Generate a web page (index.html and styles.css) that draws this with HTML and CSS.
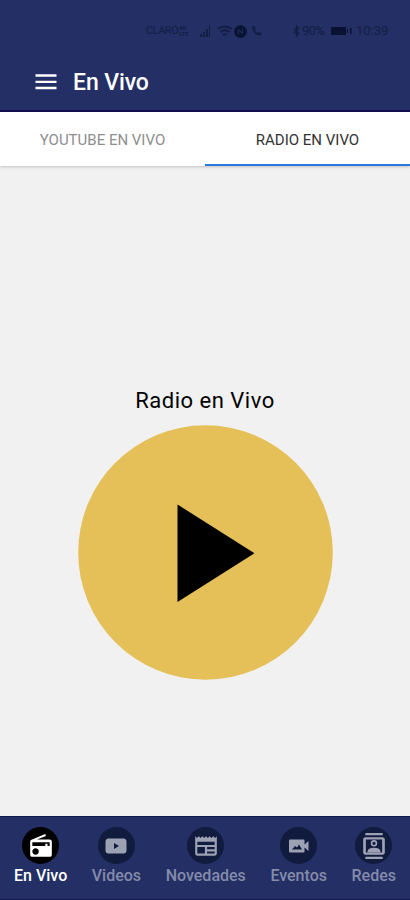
FILE: index.html
```
<!DOCTYPE html>
<html lang="es">
  <head>
    <meta charset="utf-8">
    <title>En Vivo</title>
    <link rel="stylesheet" href="styles.css">
  </head>
  <body>

    <header class="app-header">
      <div class="status-bar">
        <span class="carrier">CLARO</span>
        <span class="network"><span>4G</span><span>LTE</span></span>
        <svg class="signal" width="11" height="12" viewBox="0 0 11 12"><path d="M0 9h2v3H0zM3 7h2v5H3zM6 4h2v8H6zM9 0h1v12H9z"/></svg>
        <svg class="wifi" width="16" height="13" viewBox="0 0 16 13"><path d="M1 4q7-5 14 0M3.500 7q4.500-3.500 9 0M6 10q2-1.500 4 0"/></svg>
        <svg class="nfc" width="13" height="13" viewBox="0 0 13 13"><circle cx="6.500" cy="6.500" r="6.300"/><path d="M4.300 9.500v-5l4.400 4v-5"/></svg>
        <svg class="phone" width="12" height="12" viewBox="0 0 12 12"><path d="M1 1l2.500 0 1 3-1 1q1 2 3.500 3l1-1 2.500 1v2.500Q2 11 1 1z"/></svg>
        <svg class="bluetooth" width="7" height="12" viewBox="0 0 7 12"><path d="M1 3.500l4.500 4.500L3.500 11V1l2 2.500L1 8"/></svg>
        <span class="percent">90%</span>
        <svg class="battery" width="21" height="10" viewBox="0 0 21 10"><path d="M0 1h15v8H0zM16 3h1v4h-1zM19 2h1.500v6H19z"/></svg>
        <span class="clock">10:39</span>
      </div>

      <div class="title-bar">
        <svg class="menu-icon" width="22" height="18" viewBox="0 0 22 18"><path d="M0.500 2.500h21M0.500 8.800h21M0.500 15h21"/></svg>
        <h1>En Vivo</h1>
      </div>
    </header>

    <nav class="tabs">
      <a class="tab">YOUTUBE EN VIVO</a>
      <a class="tab tab-active">RADIO EN VIVO</a>
    </nav>

    <main class="player">
      <h2>Radio en Vivo</h2>
      <svg class="play-button" width="256" height="256" viewBox="0 0 256 256">
        <circle cx="128.500" cy="127.500" r="127.300"/>
        <path d="M100.500 79.500v97.500l77-48.700z"/>
      </svg>
    </main>

    <nav class="bottom-nav">
      <a class="nav-item nav-active">
        <span class="nav-icon">
          <svg width="26" height="26" viewBox="0 0 24 24"><path fill-rule="evenodd" d="M3.240 6.150C2.510 6.430 2 7.170 2 8v12c0 1.100.890 2 2 2h16c1.110 0 2-.900 2-2V8c0-1.110-.890-2-2-2H8.300l8.260-3.340L15.880 1 3.240 6.150zM7 20c-1.660 0-3-1.340-3-3s1.340-3 3-3 3 1.340 3 3-1.340 3-3 3zm13-8h-2v-2h-2v2H4V8.500h16z"/></svg>
        </span>
        <span>En Vivo</span>
      </a>
      <a class="nav-item">
        <span class="nav-icon">
          <svg width="24" height="24" viewBox="0 0 24 24"><path fill-rule="evenodd" d="M4.500 4.500h15Q22.500 4.500 22.500 8v8q0 3.500-3 3.500h-15q-3 0-3-3.500V8q0-3.500 3-3.500zM10 9v6l5-3z"/></svg>
        </span>
        <span>Videos</span>
      </a>
      <a class="nav-item">
        <span class="nav-icon">
          <svg width="26" height="26" viewBox="0 0 24 24"><path fill-rule="evenodd" d="M22 3l-1.670 1.670L18.670 3 17 4.670 15.330 3l-1.660 1.670L12 3l-1.670 1.670L8.670 3 7 4.670 5.330 3 3.670 4.670 2 3v16c0 1.100.900 2 2 2h16c1.100 0 2-.900 2-2V3zM11 19H4v-6h7v6zm9 0h-7v-2h7v2zm0-4h-7v-2h7v2zm0-4H4V8h16v3z"/></svg>
        </span>
        <span>Novedades</span>
      </a>
      <a class="nav-item">
        <span class="nav-icon">
          <svg width="20" height="14" viewBox="0 0 20 14"><path fill-rule="evenodd" d="M1 0.500h13.500q1 0 1 1v4L19.500 2v10l-4-3.500v4q0 1-1 1H1q-1 0-1-1v-11q0-1 1-1zM3 10.500h10L10 5.500 8 8.500 6 7z"/></svg>
        </span>
        <span>Eventos</span>
      </a>
      <a class="nav-item">
        <span class="nav-icon">
          <svg width="26" height="26" viewBox="0 0 24 24"><path fill-rule="evenodd" d="M4 0h16v2H4zM4 22h16v2H4zM20 4H4c-1.100 0-2 .900-2 2v12c0 1.100.900 2 2 2h16c1.100 0 2-.900 2-2V6c0-1.100-.900-2-2-2zM4.500 6h15v12h-15z"/><path fill-rule="evenodd" d="M12 6.500a3 3 0 1 1 0 6 3 3 0 0 1 0-6zM12 8a1.500 1.500 0 1 0 0 3 1.500 1.500 0 0 0 0-3zM6 18v-1.500Q7 13.500 12 13.500t6 3V18z"/></svg>
        </span>
        <span>Redes</span>
      </a>
    </nav>

  </body>
</html>
```

FILE: styles.css
```
body {
  margin: 0;
  height: 900px;
  overflow: hidden;
  background-color: #F1F1F1;
  font-family: Roboto, sans-serif;
  display: flex;
  flex-direction: column;
}

h1, h2 {
  margin: 0;
}

.app-header {
  box-sizing: border-box;
  height: 112px;
  background-color: #232F65;
  border-bottom: 2px solid #140D50;
}

.status-bar {
  display: flex;
  align-items: center;
  height: 20px;
  padding-top: 21px;
  padding-left: 146px;
  color: #141D43;
  font-size: 13px;
  line-height: 20px;

  svg {
    flex: none;
    fill: #141D43;
  }

  .carrier {
    width: 33px;
    font-size: 11px;
    letter-spacing: -0.5px;
  }

  .network {
    width: 21px;
    display: flex;
    flex-direction: column;
    font-size: 6px;
    font-weight: 700;
    line-height: 6px;
  }

  .signal {
    margin-right: 6px;
  }

  .wifi {
    fill: none;
    stroke: #141D43;
    stroke-width: 1.8;
  }

  .nfc {
    margin-left: 1px;
    fill: #091230;
  }

  .nfc path {
    fill: none;
    stroke: #232F65;
  }

  .phone {
    margin-left: 4px;
  }

  .bluetooth {
    margin-left: 30px;
    fill: none;
    stroke: #141D43;
    stroke-width: 1.3;
  }

  .percent {
    width: 29px;
    margin-left: 2px;
    letter-spacing: -0.7px;
  }

  .battery {
    fill: #091230;
  }

  .clock {
    margin-left: 4px;
  }
}

.title-bar {
  display: flex;
  align-items: center;
  height: 40px;
  padding-top: 21px;
  padding-left: 35px;

  .menu-icon {
    margin-right: 16px;
    stroke: #FFFFFF;
    stroke-width: 2.3;
  }

  h1 {
    color: #FFFFFF;
    font-size: 23px;
    font-weight: 500;
    letter-spacing: -0.1px;
  }
}

.tabs {
  display: flex;
  height: 54px;
  background-color: #FFFFFF;
  box-shadow: 0 1px 3px rgba(0, 0, 0, 0.2);

  .tab {
    box-sizing: border-box;
    flex: 1;
    border-bottom: 2px solid transparent;
    color: #8E8E8E;
    font-size: 15px;
    line-height: 57px;
    text-align: center;
  }

  .tab-active {
    border-color: #2878DC;
    color: #333333;
  }
}

.player {
  flex: 1;
  display: flex;
  flex-direction: column;
  align-items: center;
  padding-top: 220px;

  h2 {
    color: #000000;
    font-size: 22px;
    font-weight: 400;
    line-height: 30px;
    letter-spacing: 0.5px;
  }

  .play-button {
    margin-top: 9px;
    fill: #000000;
  }

  .play-button circle {
    fill: #E5C059;
  }
}

.bottom-nav {
  box-sizing: border-box;
  display: flex;
  justify-content: space-between;
  height: 84px;
  padding: 10px 14px 0;
  background-color: #232F65;
  border-top: 1px solid #11184A;
  border-bottom: 1px solid #161C4D;

  .nav-item {
    display: flex;
    flex-direction: column;
    align-items: center;
    color: #858BAA;
    font-size: 16px;
    font-weight: 500;
    line-height: 22px;
  }

  .nav-icon {
    display: flex;
    align-items: center;
    justify-content: center;
    width: 37px;
    height: 37px;
    margin-bottom: 1px;
    border-radius: 50%;
    background-color: #111B3E;
    fill: #9DA1B4;
  }

  .nav-active {
    color: #FFFFFF;
  }

  .nav-active .nav-icon {
    background-color: #000000;
    fill: #FFFFFF;
  }
}
```
